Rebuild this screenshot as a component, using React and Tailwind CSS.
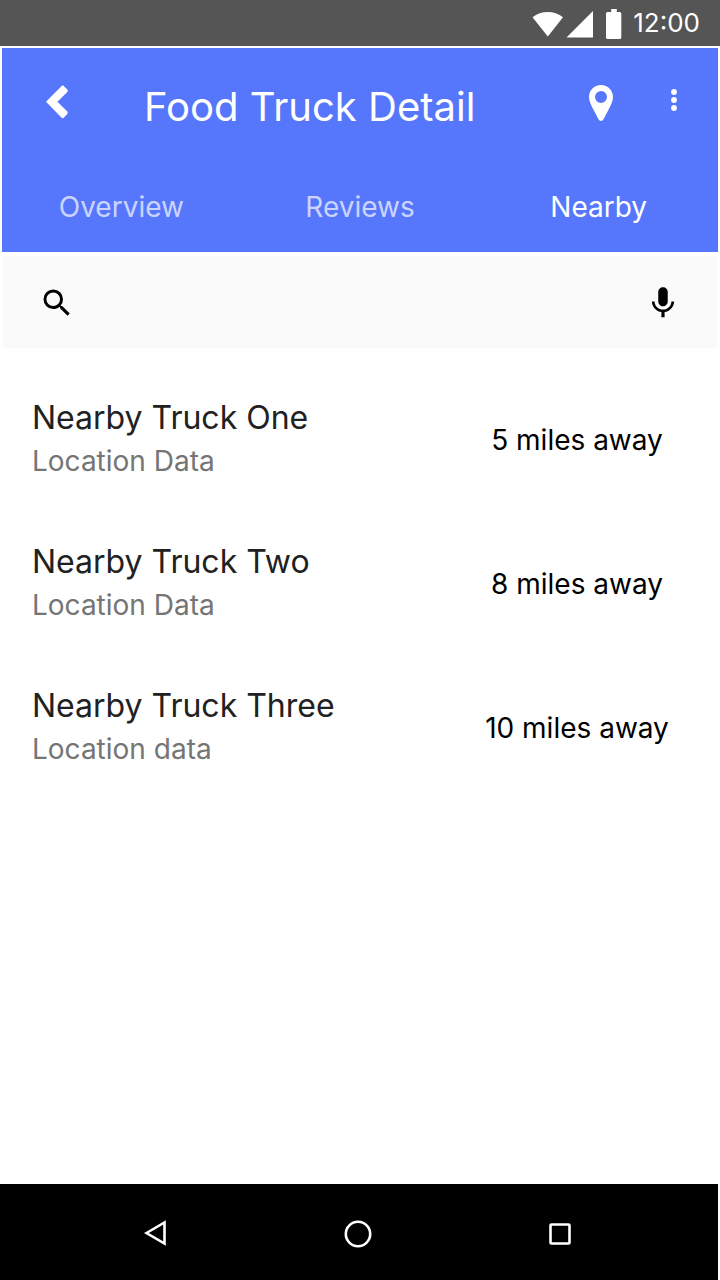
const TABS = ["Overview", "Reviews", "Nearby"];

const TRUCKS = [
  { name: "Nearby Truck One", location: "Location Data", distance: "5 miles away" },
  { name: "Nearby Truck Two", location: "Location Data", distance: "8 miles away" },
  { name: "Nearby Truck Three", location: "Location data", distance: "10 miles away" },
];

function StatusBar() {
  return (
    <div className="flex h-[46px] items-center justify-end gap-2.5 bg-[#555555] pr-5 text-white">
      <svg className="mt-0.5" width="91" height="30" viewBox="0 0 91 30" fill="currentColor" aria-hidden="true">
        <path d="M0.5 8.3C9 1.3 22.500 1.300 31 8.300L15.800 27.500Z" />
        <path d="M61 2V28.500H34.500Z" />
        <path d="M79.200 0h5.600v3h3a1.500 1.500 0 0 1 1.500 1.500v24a1.500 1.500 0 0 1-1.500 1.500H75.500a1.500 1.500 0 0 1-1.500-1.500v-24A1.500 1.500 0 0 1 75.500 3h3.700z" />
      </svg>
      <time className="text-[26px] leading-[30px]">12:00</time>
    </div>
  );
}

function Header() {
  return (
    <header className="mx-0.5 mt-0.5 bg-[#5677fc] text-white">
      <div className="flex h-[116px] items-center justify-between pr-5">
        <div className="flex items-center gap-11">
          <button type="button" aria-label="Back" className="flex h-14 items-center pb-2 pl-11">
            <svg width="22" height="34" viewBox="0 0 22 34" fill="currentColor" aria-hidden="true">
              <path d="M0 16.800L15.900 0.700Q16.700 0 17.500 0.700L21.600 4.800V6.800L11.400 16.800L21.600 26.800V28.800L17.500 33Q16.700 33.700 15.900 33Z" />
            </svg>
          </button>
          <h1 className="pt-0.5 pl-8 text-[40px] leading-[48px]">Food Truck Detail</h1>
        </div>
        <div className="flex items-center gap-[37px]">
          <button type="button" aria-label="Show on map" className="flex h-14 items-center pb-1.5">
            <svg width="24" height="36" viewBox="0 0 24 36" fill="currentColor" aria-hidden="true">
              <path fillRule="evenodd" d="M12 0C5.200 0 0 5.400 0 12c0 3.500 1.600 6.900 3.200 10.200L9.600 34.600Q10.400 36 12 36t2.400-1.400L20.800 22.200C22.400 18.900 24 15.500 24 12 24 5.400 18.800 0 12 0zm0 6a6 6 0 1 1 0 12 6 6 0 0 1 0-12z" />
            </svg>
          </button>
          <button type="button" aria-label="More options" className="flex h-14 w-12 items-center justify-center pb-3">
            <svg width="6" height="22" viewBox="0 0 6 22" fill="currentColor" aria-hidden="true">
              <circle cx="3" cy="3" r="2.900" />
              <circle cx="3" cy="11" r="2.900" />
              <circle cx="3" cy="19" r="2.900" />
            </svg>
          </button>
        </div>
      </div>
      <nav className="grid h-[88px] grid-cols-3 pb-0.5">
        {TABS.map((tab) => (
          <a
            key={tab}
            href={`#${tab.toLowerCase()}`}
            aria-current={tab === "Nearby" ? "page" : undefined}
            className="flex items-center justify-center text-[28px] leading-9 text-white/70 aria-[current=page]:text-white"
          >
            {tab}
          </a>
        ))}
      </nav>
    </header>
  );
}

function SearchBar() {
  return (
    <form role="search" className="mx-0.5 mt-1 flex h-[92px] items-center gap-4 rounded-sm bg-[#fafafa] pt-0.5 pr-9 pl-[37px] text-black">
      <label htmlFor="search" aria-label="Search" className="shrink-0">
        <svg width="36" height="36" viewBox="0 0 24 24" fill="currentColor" aria-hidden="true">
          <path d="M15.500 14h-.79l-.28-.27A6.471 6.471 0 0 0 16 9.500 6.500 6.500 0 1 0 9.500 16c1.610 0 3.090-.59 4.230-1.570l.27.28v.79l5 4.990L20.490 19l-4.990-5zm-6 0C7.010 14 5 11.990 5 9.500S7.010 5 9.500 5 14 7.010 14 9.500 11.990 14 9.500 14z" />
        </svg>
      </label>
      <input id="search" type="search" className="h-14 min-w-0 flex-1 bg-transparent text-[28px] outline-none" />
      <button type="button" aria-label="Search by voice">
        <svg width="38" height="38" viewBox="0 0 24 24" fill="currentColor" aria-hidden="true">
          <path d="M12 14c1.660 0 2.990-1.340 2.990-3L15 5c0-1.660-1.340-3-3-3S9 3.340 9 5v6c0 1.660 1.340 3 3 3zm5.300-3c0 3-2.540 5.100-5.300 5.100S6.700 14 6.700 11H5c0 3.410 2.720 6.230 6 6.720V21h2v-3.280c3.280-.48 6-3.300 6-6.720h-1.700z" />
        </svg>
      </button>
    </form>
  );
}

function TruckList() {
  return (
    <ul className="flex-1 pt-5">
      {TRUCKS.map((truck) => (
        <li key={truck.name} className="flex h-36 items-center justify-between px-8">
          <div className="pb-0.5">
            <h2 className="text-[32px] leading-[44px] text-[#212121]">{truck.name}</h2>
            <p className="text-[28px] leading-[42px] text-[#757575]">{truck.location}</p>
          </div>
          <p className="w-[222px] text-center text-[28px] leading-9 text-black">{truck.distance}</p>
        </li>
      ))}
    </ul>
  );
}

function SystemNav() {
  return (
    <footer className="mr-0.5 flex h-24 items-center justify-center gap-[152px] bg-black pt-1 pr-0.5 text-white">
      <button type="button" aria-label="System back">
        <svg width="50" height="50" viewBox="0 0 50 50" fill="none" stroke="currentColor" strokeWidth="2.600" aria-hidden="true">
          <path d="M15.500 24L33.500 13.500V34.500Z" />
        </svg>
      </button>
      <button type="button" aria-label="Home">
        <svg width="50" height="50" viewBox="0 0 50 50" fill="none" stroke="currentColor" strokeWidth="2.600" aria-hidden="true">
          <circle cx="25" cy="25" r="12.200" />
        </svg>
      </button>
      <button type="button" aria-label="Recent apps">
        <svg width="50" height="50" viewBox="0 0 50 50" fill="none" stroke="currentColor" strokeWidth="2.600" aria-hidden="true">
          <rect x="15.500" y="15.500" width="19" height="19" rx="1" />
        </svg>
      </button>
    </footer>
  );
}

export default function App() {
  return (
    <div className="flex min-h-screen flex-col bg-white font-['Inter',sans-serif]">
      <StatusBar />
      <Header />
      <SearchBar />
      <TruckList />
      <SystemNav />
    </div>
  );
}
